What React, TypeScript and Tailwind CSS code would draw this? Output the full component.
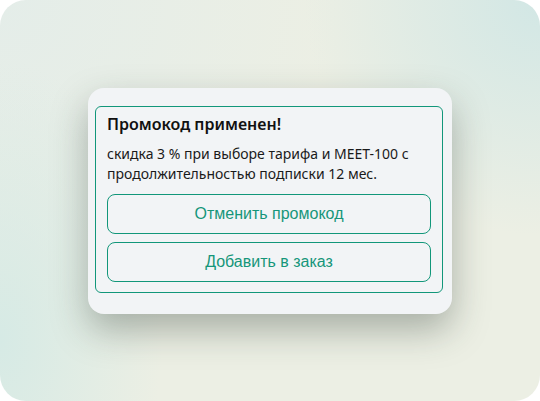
export default function App() {
  return (
    <div className="w-[540px] h-[401px] bg-white">
      <div
        className="w-full h-full rounded-[26px] flex items-start justify-center pt-[88px] bg-[#ecefe4]"
        style={{
          backgroundImage:
            "radial-gradient(circle at 100% 0%, #d2e7e5 0%, rgba(210,231,229,0) 35%), radial-gradient(ellipse 30% 70% at 0% 85%, #d6eae5 0%, rgba(214,234,229,0) 100%), radial-gradient(circle at 0% 0%, #e4ede9 0%, rgba(228,237,233,0) 50%)",
        }}
      >
        <div className="w-[364px] rounded-2xl bg-[#f2f4f6] pt-[18px] pb-[21px] pl-[7px] pr-[9px] shadow-[0_16px_36px_rgba(40,55,45,0.35)]">
          <div className="rounded-md border border-[#12977a] px-[11px] pt-[5px] pb-[10px] font-['Noto_Sans',sans-serif]">
            <h2 className="text-base leading-6 font-semibold text-[#111]">Промокод применен!</h2>
            <p className="mt-[8px] text-sm leading-[19.5px] text-[#1a1a1a]">
              скидка 3 % при выборе тарифа и MEET-100 с продолжительностью подписки 12 мес.
            </p>
            <div className="mt-[11px] flex flex-col gap-2">
              <button className="h-10 w-full rounded-lg border border-[#12977a] font-['Liberation_Sans',Arial,sans-serif] text-base text-[#16967a]">
                Отменить промокод
              </button>
              <button className="h-10 w-full rounded-lg border border-[#12977a] font-['Liberation_Sans',Arial,sans-serif] text-base text-[#16967a]">
                Добавить в заказ
              </button>
            </div>
          </div>
        </div>
      </div>
    </div>
  )
}
